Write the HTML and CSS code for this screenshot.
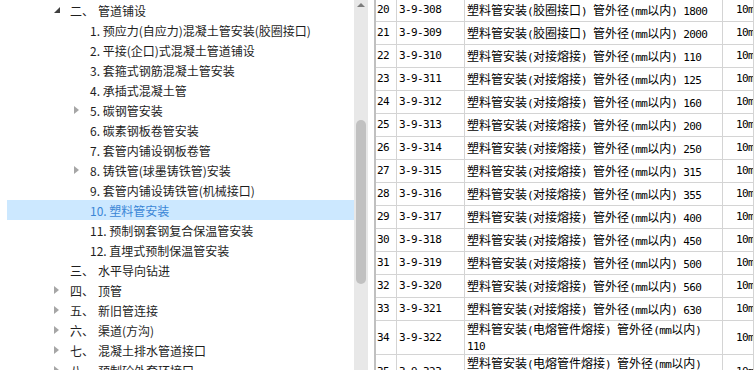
FILE: index.html
```html
<!DOCTYPE html>
<html lang="zh-CN">
<head>
  <meta charset="UTF-8">
  <title>定额章节</title>
  <link rel="stylesheet" href="styles.css">
</head>
<body>
  <div class="app">
    <div class="tree">
      <div class="node l1"><span class="tw"><svg width="6" height="6"><path d="M6 0V6H0Z" fill="#404040"/></svg></span><span class="ord">二、</span>管道铺设</div>
      <div class="node l2"><span class="tw"></span>1. 预应力(自应力)混凝土管安装(胶圈接口)</div>
      <div class="node l2"><span class="tw"></span>2. 平接(企口)式混凝土管道铺设</div>
      <div class="node l2"><span class="tw"></span>3. 套箍式钢筋混凝土管安装</div>
      <div class="node l2"><span class="tw"></span>4. 承插式混凝土管</div>
      <div class="node l2"><span class="tw"><svg width="5" height="8"><path d="M0 0L5 4L0 8Z" fill="#a6a6a6"/></svg></span>5. 碳钢管安装</div>
      <div class="node l2"><span class="tw"></span>6. 碳素钢板卷管安装</div>
      <div class="node l2"><span class="tw"></span>7. 套管内铺设钢板卷管</div>
      <div class="node l2"><span class="tw"><svg width="5" height="8"><path d="M0 0L5 4L0 8Z" fill="#a6a6a6"/></svg></span>8. 铸铁管(球墨铸铁管)安装</div>
      <div class="node l2"><span class="tw"></span>9. 套管内铺设铸铁管(机械接口)</div>
      <div class="node l2 sel"><span class="tw"></span>10. 塑料管安装</div>
      <div class="node l2"><span class="tw"></span>11. 预制钢套钢复合保温管安装</div>
      <div class="node l2"><span class="tw"></span>12. 直埋式预制保温管安装</div>
      <div class="node l1"><span class="tw"></span><span class="ord">三、</span>水平导向钻进</div>
      <div class="node l1"><span class="tw"><svg width="5" height="8"><path d="M0 0L5 4L0 8Z" fill="#a6a6a6"/></svg></span><span class="ord">四、</span>顶管</div>
      <div class="node l1"><span class="tw"><svg width="5" height="8"><path d="M0 0L5 4L0 8Z" fill="#a6a6a6"/></svg></span><span class="ord">五、</span>新旧管连接</div>
      <div class="node l1"><span class="tw"><svg width="5" height="8"><path d="M0 0L5 4L0 8Z" fill="#a6a6a6"/></svg></span><span class="ord">六、</span>渠道(方沟)</div>
      <div class="node l1"><span class="tw"><svg width="5" height="8"><path d="M0 0L5 4L0 8Z" fill="#a6a6a6"/></svg></span><span class="ord">七、</span>混凝土排水管道接口</div>
      <div class="node l1"><span class="tw"><svg width="5" height="8"><path d="M0 0L5 4L0 8Z" fill="#a6a6a6"/></svg></span><span class="ord">八、</span>预制砼外套环接口</div>
    </div>

    <div class="vscroll">
      <div class="arrow-up"></div>
      <div class="thumb"></div>
    </div>

    <div class="grid">
      <div class="row"><div class="c no">20</div><div class="c code">3-9-308</div><div class="c name">塑料管安装<span class="en">(</span>胶圈接口<span class="en">) </span>管外径<span class="en">(mm</span>以内<span class="en">) 1800</span></div><div class="c unit">10m</div></div>
      <div class="row"><div class="c no">21</div><div class="c code">3-9-309</div><div class="c name">塑料管安装<span class="en">(</span>胶圈接口<span class="en">) </span>管外径<span class="en">(mm</span>以内<span class="en">) 2000</span></div><div class="c unit">10m</div></div>
      <div class="row"><div class="c no">22</div><div class="c code">3-9-310</div><div class="c name">塑料管安装<span class="en">(</span>对接熔接<span class="en">) </span>管外径<span class="en">(mm</span>以内<span class="en">) 110</span></div><div class="c unit">10m</div></div>
      <div class="row"><div class="c no">23</div><div class="c code">3-9-311</div><div class="c name">塑料管安装<span class="en">(</span>对接熔接<span class="en">) </span>管外径<span class="en">(mm</span>以内<span class="en">) 125</span></div><div class="c unit">10m</div></div>
      <div class="row"><div class="c no">24</div><div class="c code">3-9-312</div><div class="c name">塑料管安装<span class="en">(</span>对接熔接<span class="en">) </span>管外径<span class="en">(mm</span>以内<span class="en">) 160</span></div><div class="c unit">10m</div></div>
      <div class="row"><div class="c no">25</div><div class="c code">3-9-313</div><div class="c name">塑料管安装<span class="en">(</span>对接熔接<span class="en">) </span>管外径<span class="en">(mm</span>以内<span class="en">) 200</span></div><div class="c unit">10m</div></div>
      <div class="row"><div class="c no">26</div><div class="c code">3-9-314</div><div class="c name">塑料管安装<span class="en">(</span>对接熔接<span class="en">) </span>管外径<span class="en">(mm</span>以内<span class="en">) 250</span></div><div class="c unit">10m</div></div>
      <div class="row"><div class="c no">27</div><div class="c code">3-9-315</div><div class="c name">塑料管安装<span class="en">(</span>对接熔接<span class="en">) </span>管外径<span class="en">(mm</span>以内<span class="en">) 315</span></div><div class="c unit">10m</div></div>
      <div class="row"><div class="c no">28</div><div class="c code">3-9-316</div><div class="c name">塑料管安装<span class="en">(</span>对接熔接<span class="en">) </span>管外径<span class="en">(mm</span>以内<span class="en">) 355</span></div><div class="c unit">10m</div></div>
      <div class="row"><div class="c no">29</div><div class="c code">3-9-317</div><div class="c name">塑料管安装<span class="en">(</span>对接熔接<span class="en">) </span>管外径<span class="en">(mm</span>以内<span class="en">) 400</span></div><div class="c unit">10m</div></div>
      <div class="row"><div class="c no">30</div><div class="c code">3-9-318</div><div class="c name">塑料管安装<span class="en">(</span>对接熔接<span class="en">) </span>管外径<span class="en">(mm</span>以内<span class="en">) 450</span></div><div class="c unit">10m</div></div>
      <div class="row"><div class="c no">31</div><div class="c code">3-9-319</div><div class="c name">塑料管安装<span class="en">(</span>对接熔接<span class="en">) </span>管外径<span class="en">(mm</span>以内<span class="en">) 500</span></div><div class="c unit">10m</div></div>
      <div class="row"><div class="c no">32</div><div class="c code">3-9-320</div><div class="c name">塑料管安装<span class="en">(</span>对接熔接<span class="en">) </span>管外径<span class="en">(mm</span>以内<span class="en">) 560</span></div><div class="c unit">10m</div></div>
      <div class="row"><div class="c no">33</div><div class="c code">3-9-321</div><div class="c name">塑料管安装<span class="en">(</span>对接熔接<span class="en">) </span>管外径<span class="en">(mm</span>以内<span class="en">) 630</span></div><div class="c unit">10m</div></div>
      <div class="row tall"><div class="c no">34</div><div class="c code">3-9-322</div><div class="c name">塑料管安装<span class="en">(</span>电熔管件熔接<span class="en">) </span>管外径<span class="en">(mm</span>以内<span class="en">)</span><br><span class="en">110</span></div><div class="c unit">10m</div></div>
      <div class="row tall"><div class="c no">35</div><div class="c code">3-9-323</div><div class="c name">塑料管安装<span class="en">(</span>电熔管件熔接<span class="en">) </span>管外径<span class="en">(mm</span>以内<span class="en">)</span><br><span class="en">160</span></div><div class="c unit">10m</div></div>
    </div>
  </div>
</body>
</html>
```

FILE: styles.css
```css
body {
  margin: 0;
  background: #fff;
  overflow: hidden;
}

.app {
  display: flex;
  height: 370px;
  overflow: hidden;
}

/* left chapter tree */
.tree {
  flex: none;
  width: 354px;
  padding-left: 7px;
  box-sizing: border-box;
  font: 12px "Noto Sans CJK SC", sans-serif;
  color: #1e1e1e;
}

.node {
  display: flex;
  align-items: center;
  height: 20px;
  white-space: nowrap;
}

.node.l1 {
  padding-left: 45px;
}

.node.l2 {
  padding-left: 65px;
}

.node.sel {
  background: #cce8ff;
  color: #3b86d6;
}

.tw {
  flex: none;
  width: 18px;
  display: flex;
  align-items: center;
}

.tw svg {
  margin-left: 2px;
}

.ord {
  margin-right: 4px;
}

/* vertical scrollbar */
.vscroll {
  flex: none;
  width: 14px;
  background: #e8e8e8;
  display: flex;
  flex-direction: column;
  align-items: center;
}

.arrow-up {
  margin-top: 3px;
  width: 0;
  height: 0;
  border-style: solid;
  border-width: 0 4px 4px;
  border-color: transparent transparent #7c7c7c;
}

.thumb {
  margin-top: 113px;
  width: 10px;
  height: 164px;
  border-radius: 5px;
  background: #c1c1c1;
}

/* quota grid */
.grid {
  flex: 1;
  margin-left: 6px;
  margin-top: -1px;
  border-left: 2px solid #c0c0c0;
  font: 12px "Noto Sans CJK SC", sans-serif;
  color: #000;
}

.row {
  display: grid;
  grid-template-columns: 21px 68px 258px 1fr;
}

.c {
  height: 23px;
  box-sizing: border-box;
  border-right: 1px solid #d4d4d4;
  border-bottom: 1px solid #d4d4d4;
  padding-left: 2px;
  line-height: 22px;
  white-space: nowrap;
  overflow: hidden;
}

.row.tall .c {
  height: 34px;
  line-height: 33px;
}

.row.tall .name {
  line-height: 14px;
  padding-top: 1px;
}

.no {
  padding-left: 1px;
}

.unit {
  padding-left: 13px;
}

.no,
.code,
.unit,
.en {
  font-family: "DejaVu Sans Mono", monospace;
  font-size: 11px;
  letter-spacing: -0.6px;
}
```
